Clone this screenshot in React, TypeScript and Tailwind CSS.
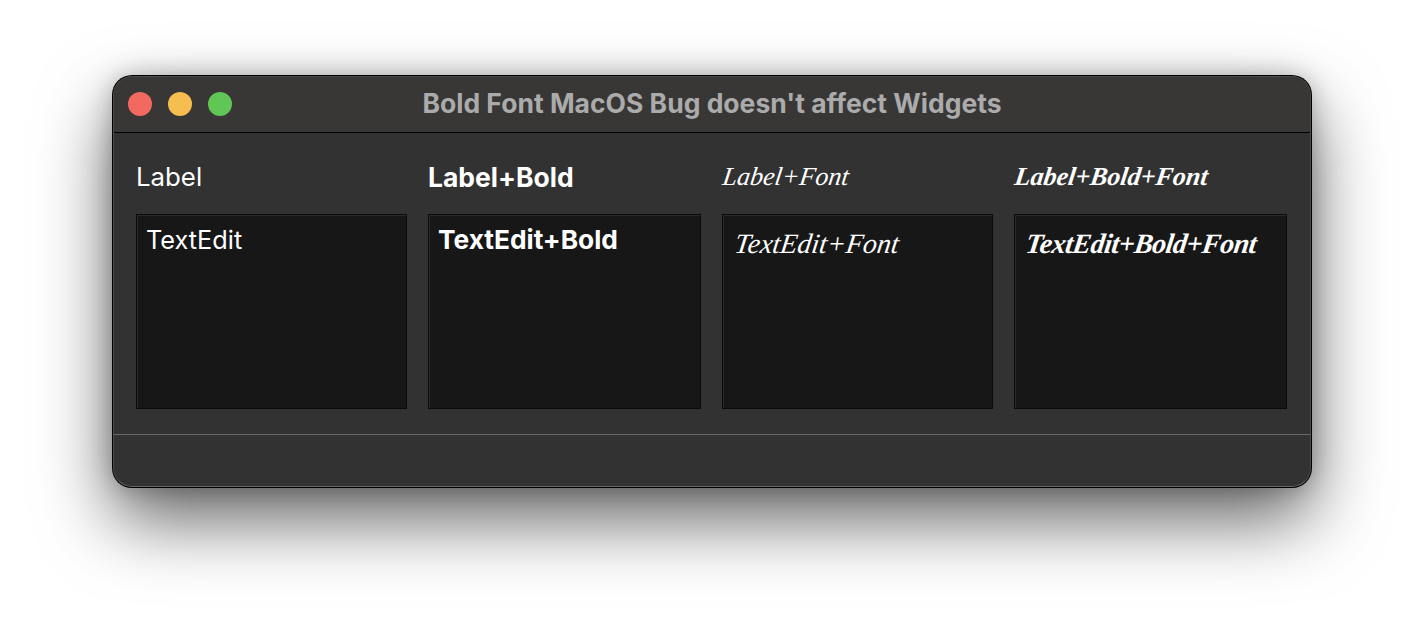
const SANS = "font-['Inter','Liberation_Sans',sans-serif]";

const columns = [
  { label: "Label", edit: "TextEdit", bold: false, script: false, width: "w-[271px]" },
  { label: "Label+Bold", edit: "TextEdit+Bold", bold: true, script: false, width: "w-[273px]" },
  { label: "Label+Font", edit: "TextEdit+Font", bold: false, script: true, width: "w-[271px]" },
  { label: "Label+Bold+Font", edit: "TextEdit+Bold+Font", bold: true, script: true, width: "w-[273px]" },
];

function labelClass(bold: boolean, script: boolean) {
  if (script) {
    return `font-['Liberation_Serif',serif] italic text-[26px] pb-[14px] pl-[1px] ${bold ? "font-bold" : "font-normal"}`;
  }
  return bold ? `${SANS} text-[26.5px] font-bold pb-[11px]` : `${SANS} text-[25.8px] font-normal pb-[11px]`;
}

function editClass(bold: boolean, script: boolean) {
  if (script) {
    return bold
      ? "font-['Liberation_Serif',serif] italic text-[28px] font-bold tracking-[-0.5px] pt-[8px] pl-[11px]"
      : "font-['Liberation_Serif',serif] italic text-[28px] font-normal pt-[8px] pl-[12px]";
  }
  return bold ? `${SANS} text-[26.3px] font-bold pt-[5px] pl-[9px]` : `${SANS} text-[25.3px] font-normal pt-[6px] pl-[9px]`;
}

export default function App() {
  return (
    <div className="w-[1424px] h-[636px] bg-white overflow-hidden pl-[113px] pt-[76px]">
      <div className="w-[1198px] h-[411px] rounded-[19px] bg-[#323232] border border-[#4c4c4c] border-b-[#666666] flex flex-col overflow-hidden shadow-[0_0_0_1px_#000,0_32px_72px_rgba(0,0,0,0.62),0_0_24px_rgba(0,0,0,0.26)]">
        {/* Title bar */}
        <div className="h-[56px] shrink-0 bg-[#383736] border-b border-black flex items-center relative pl-[14px] pb-[1px] gap-[16px]">
          <span className="w-[24px] h-[24px] rounded-full bg-[#f1695f]" />
          <span className="w-[24px] h-[24px] rounded-full bg-[#f6bd4f]" />
          <span className="w-[24px] h-[24px] rounded-full bg-[#60c655]" />
          <div className={`absolute inset-0 pb-[2px] flex items-center justify-center ${SANS} font-bold text-[26.5px] text-[#ababab]`}>
            Bold Font MacOS Bug doesn't affect Widgets
          </div>
        </div>

        {/* Content */}
        <div className="flex-1 flex gap-[21px] pl-[22px] pt-[19px]">
          {columns.map((c) => (
            <div key={c.label} className={`${c.width} flex flex-col`}>
              <div className={`h-[62px] flex items-center text-white whitespace-nowrap ${labelClass(c.bold, c.script)}`}>
                <span className={c.script ? "inline-block -skew-x-[8deg]" : ""}>{c.label}</span>
              </div>
              <div className={`h-[195px] bg-[#171717] border border-[#0b0b0b] shadow-[inset_1px_1px_0_#2a2a2a] text-white whitespace-nowrap ${editClass(c.bold, c.script)}`}>
                <span className={c.script ? "inline-block -skew-x-[8deg]" : ""}>{c.edit}</span>
              </div>
            </div>
          ))}
        </div>

        {/* Status bar */}
        <div className="h-[52px] shrink-0 border-t border-[#686868]" />
      </div>
    </div>
  );
}
